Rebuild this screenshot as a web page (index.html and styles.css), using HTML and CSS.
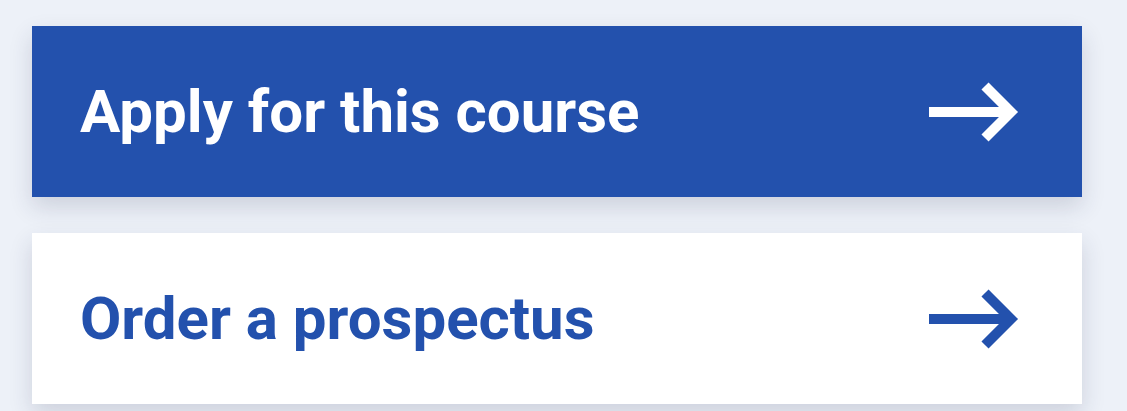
FILE: index.html
```html
<!DOCTYPE html>
<html lang="en">
<head>
    <meta charset="UTF-8">
    <meta name="viewport" content="width=device-width, initial-scale=1.0">
    <title>Course actions</title>
    <link rel="stylesheet" href="styles.css">
</head>
<body>
    <div class="actions">
        <a class="action action-primary" href="#apply">
            <span class="action-label">Apply for this course</span>
            <svg class="action-arrow" viewBox="0 0 90 60" aria-hidden="true">
                <path d="M0 30 H82 M56 4 L82 30 L56 56" />
            </svg>
        </a>

        <a class="action action-secondary" href="#prospectus">
            <span class="action-label">Order a prospectus</span>
            <svg class="action-arrow" viewBox="0 0 90 60" aria-hidden="true">
                <path d="M0 30 H82 M56 4 L82 30 L56 56" />
            </svg>
        </a>
    </div>
</body>
</html>
```

FILE: styles.css
```css
* {
    margin: 0;
    padding: 0;
    box-sizing: border-box;
}

body {
    background: #edf1f8;
    font-family: Roboto, 'Liberation Sans', sans-serif;
    padding: 26px 32px;
}

.actions {
    width: 1050px;
    display: flex;
    flex-direction: column;
    gap: 36px;
}

.action {
    display: flex;
    align-items: center;
    justify-content: space-between;
    height: 171px;
    padding: 0 63px 0 48px;
    text-decoration: none;
    box-shadow: 0 10px 22px rgba(35, 45, 80, 0.16);
}

.action-label {
    font-size: 60px;
    font-weight: 700;
    line-height: 75px;
}

.action-arrow {
    width: 90px;
    height: 60px;
    fill: none;
    stroke: currentColor;
    stroke-width: 10;
    stroke-linejoin: miter;
    stroke-linecap: butt;
}

.action-primary {
    background: #2351ad;
    color: #ffffff;
}

.action-secondary {
    background: #ffffff;
    color: #2351ad;
}
```
